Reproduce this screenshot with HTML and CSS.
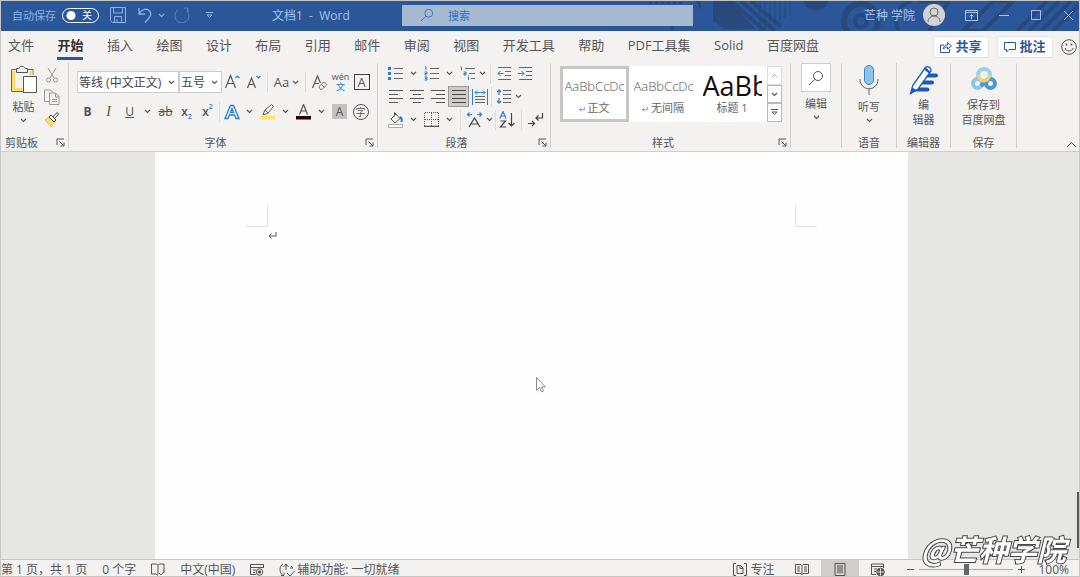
FILE: index.html
```html
<!DOCTYPE html>
<html lang="zh-CN">
<head>
	<meta charset="utf-8">
	<meta name="viewport" content="width=device-width, initial-scale=1.0">
	<title>文档1 - Word</title>
	<link rel="stylesheet" href="styles.css">
</head>
<body>
	<!-- shared icons -->
	<svg class="defs" width="0" height="0">
		<symbol id="chev" viewBox="0 0 7 5"><path d="M1 1l2.500 2.500L6 1" fill="none" stroke="currentColor" stroke-width="1.100"/></symbol>
		<symbol id="launch" viewBox="0 0 9 9"><path d="M1 7V1h7M3.500 3.500L8 8M8 4.500V8H4.500" fill="none" stroke="currentColor"/></symbol>
		<symbol id="loupe" viewBox="0 0 16 16"><circle cx="10" cy="6" r="4.500" fill="none" stroke="currentColor"/><path d="M6.700 9.300L1 15" stroke="currentColor"/></symbol>
		<symbol id="mark" viewBox="0 0 9 8"><path d="M8 1v4H1M3.500 2.500L1 5l2.500 2.500" fill="none" stroke="currentColor"/></symbol>
	</svg>

	<header class="titlebar">
		<svg class="art" width="430" height="30" viewBox="0 0 430 30" fill="none" stroke="#27497d">
			<path d="M0 2h34M2 5h28" stroke-width="2" stroke-dasharray="3 3"/>
			<path d="M47 0l5 10V0zM64 0v20l12 8h30L82 0z" fill="#27497d" stroke="none"/>
			<circle cx="23" cy="27" r="2" fill="#27497d" stroke="none"/>
			<path d="M82 0l34 30M92 0l34 30M102 0l30 26" stroke-width="4"/>
			<path d="M111 0v30M116 0v30M121 0v27M126 0v24M131 0v20M136 0v17M141 0v14" stroke-width="1"/>
			<path d="M155 0a12 9 0 0 0 24 0z" fill="#27497d" stroke="none"/>
			<circle cx="212" cy="20" r="17" stroke-width="6"/>
			<circle cx="212" cy="20" r="6" stroke-width="4"/>
			<path d="M262 0c-16 6-18 20-12 30M300 0l-20 30M270 0h30" stroke-width="4"/>
			<path d="M344 0h20l-30 30h-20zM380 30l30-30M392 30l30-30M368 30l30-30M404 30l26-26" stroke-width="4"/>
		</svg>
		<div class="quick">
			<label for="autosave">自动保存</label>
			<span class="switch">
				<input type="checkbox" id="autosave" role="switch">
				<span class="state">关</span>
			</span>
			<button type="button" class="q-save" aria-label="保存"><svg width="16" height="16" viewBox="0 0 16 16" fill="none" stroke="currentColor"><path d="M.5.5h15v15h-13l-2-2zM3.500.5v5.500h9V.5M4.500 15.500v-6h7v6M7 12v3"/></svg></button>
			<button type="button" class="q-undo" aria-label="撤消"><svg width="16" height="16" viewBox="0 0 16 16" fill="none" stroke="currentColor" stroke-width="1.300"><path d="M2 1v6h6M2 6.500C5 2 10 1 12.500 4s1 5.500-1 7.500L8 15.500"/></svg></button>
			<button type="button" class="drop" aria-label="撤消列表"><svg width="7" height="5"><use href="#chev"/></svg></button>
			<button type="button" class="q-redo" aria-label="重复"><svg width="16" height="16" viewBox="0 0 16 16" fill="none" stroke="currentColor"><path d="M10 1h4v4M14 2l-1 2M4 3a7 7 0 1 0 9 1"/></svg></button>
			<button type="button" class="q-more" aria-label="自定义快速访问工具栏"><svg width="7" height="7" viewBox="0 0 7 7" fill="none" stroke="currentColor"><path d="M0 .5h7M1 3l2.500 2.500L6 3z"/></svg></button>
		</div>
		<div class="docname">文档1&nbsp; -&nbsp; Word</div>
		<div class="search">
			<svg width="14" height="14"><use href="#loupe"/></svg>
			<input type="text" placeholder="搜索" aria-label="搜索">
		</div>
		<div class="account">
			<span class="user">芒种 学院</span>
			<span class="avatar"><svg width="22" height="22" viewBox="0 0 22 22" fill="none" stroke="#666"><circle cx="11" cy="8" r="4"/><path d="M5 18c0-8 12-8 12 0"/></svg></span>
			<button type="button" aria-label="功能区显示选项"><svg width="13" height="11" viewBox="0 0 13 11" fill="none" stroke="currentColor"><path d="M.5.5h12v10H.500zM.5 2.500h12M6.500 9V4.500M4.500 6.500l2-2 2 2"/></svg></button>
			<button type="button" aria-label="最小化"><svg width="11" height="11" viewBox="0 0 11 11" stroke="currentColor"><path d="M0 5.500h10"/></svg></button>
			<button type="button" aria-label="最大化"><svg width="11" height="11" viewBox="0 0 11 11" fill="none" stroke="currentColor"><path d="M.5.5h9v9h-9z"/></svg></button>
			<button type="button" aria-label="关闭"><svg width="11" height="11" viewBox="0 0 11 11" stroke="currentColor"><path d="M1 1l9 9M10 1l-9 9"/></svg></button>
		</div>
	</header>

	<div class="tabbar">
		<nav class="tabs">
			<a href="#">文件</a>
			<a href="#" class="active">开始</a>
			<a href="#">插入</a>
			<a href="#">绘图</a>
			<a href="#">设计</a>
			<a href="#">布局</a>
			<a href="#">引用</a>
			<a href="#">邮件</a>
			<a href="#">审阅</a>
			<a href="#">视图</a>
			<a href="#">开发工具</a>
			<a href="#">帮助</a>
			<a href="#">PDF工具集</a>
			<a href="#">Solid</a>
			<a href="#">百度网盘</a>
		</nav>
		<button type="button" class="action"><svg width="12" height="12" viewBox="0 0 12 12" fill="none" stroke="currentColor"><path d="M4 4H.5v7.500h9V8M3.500 8c0-3 1.500-4 4-4V1.500l4 3.500-4 3V6c-2 0-3 .5-4 2z"/></svg>共享</button>
		<button type="button" class="action"><svg width="12" height="12" viewBox="0 0 12 12" fill="none" stroke="currentColor"><path d="M.5 1.500h11v7H5l-2.500 2.500V8.500h-2z"/></svg>批注</button>
		<button type="button" class="smile" aria-label="反馈"><svg width="16" height="16" viewBox="0 0 16 16" fill="none" stroke="currentColor"><circle cx="8" cy="8" r="7.300"/><path d="M4 9c1 4 7 4 8 0"/><path d="M5.500 4.500v2M10.500 4.500v2" stroke-width="1.500"/></svg></button>
	</div>

	<div class="ribbon">
		<section class="group clipboard">
			<div class="body">
				<button type="button" class="tall">
					<svg width="28" height="30" viewBox="0 0 28 30" fill="none" stroke="#555">
						<path d="M8 4.500H1.500v22H13M16 4.500h7V10" stroke="#666"/>
						<path d="M3.500 6v18.500H13M21 6v4" stroke="#fbdc6c" stroke-width="3"/>
						<path d="M6.500 7.500v-4H9c1-3 5-3 6 0h2.500v4z" fill="#f3f2f1"/>
						<path d="M13.500 11.500h13v16h-13z" fill="#fff"/>
					</svg>
					<span>粘贴</span>
					<svg width="7" height="5"><use href="#chev"/></svg>
				</button>
				<div class="side">
					<button type="button" aria-label="剪切"><svg width="16" height="16" viewBox="0 0 16 16" fill="none" stroke="#999"><path d="M4 1l6 10M12 1L6 11"/><circle cx="4.500" cy="13" r="2"/><circle cx="11.500" cy="13" r="2"/></svg></button>
					<button type="button" aria-label="复制"><svg width="16" height="16" viewBox="0 0 16 16" fill="none" stroke="#999"><path d="M5 12.500H.500V1H6l3 2"/><path d="M5.500 4h6L15 7.500v8H5.500zM11.500 4v4H15M8 10.500h5M8 12.500h5"/></svg></button>
					<button type="button" aria-label="格式刷"><svg width="16" height="16" viewBox="0 0 16 16" fill="none" stroke="#444"><path d="M1 9l4-3 6 5-4 4.500z" fill="#fbdc6c" stroke="#e8bf3c"/><path d="M5 6l2-2 5 5-2 2zM9 6l4-4.500 1.500 1.500L10.500 7.500" fill="#fff"/></svg></button>
				</div>
			</div>
			<div class="caption"><span>剪贴板</span><button type="button" aria-label="剪贴板选项"><svg width="9" height="9"><use href="#launch"/></svg></button></div>
		</section>

		<section class="group font">
			<div class="body rows">
				<div class="row">
					<span class="combo name">
						<select aria-label="字体"><option>等线 (中文正文)</option></select>
						<svg width="7" height="5"><use href="#chev"/></svg>
					</span>
					<span class="combo size">
						<select aria-label="字号"><option>五号</option></select>
						<svg width="7" height="5"><use href="#chev"/></svg>
					</span>
					<button type="button" aria-label="增大字号"><svg width="17" height="17" viewBox="0 0 17 17" fill="none" stroke="#555" stroke-width="1.200"><path d="M1.500 14L6.500 1.500 11.500 14M3.500 9.500h6"/><path d="M11.500 4L13.500 2l2 2" stroke="#2b7cd3"/></svg></button>
					<button type="button" aria-label="减小字号"><svg width="17" height="17" viewBox="0 0 17 17" fill="none" stroke="#555" stroke-width="1.200"><path d="M2.500 14L6.500 4 10.500 14M4 10.500h5"/><path d="M11.500 2l2 2 2-2" stroke="#2b7cd3"/></svg></button>
					<i class="sep"></i>
					<button type="button" class="case">Aa<svg width="7" height="5"><use href="#chev"/></svg></button>
					<i class="sep"></i>
					<button type="button" aria-label="清除格式"><svg width="17" height="17" viewBox="0 0 17 17" fill="none" stroke="#555" stroke-width="1.200"><path d="M1.500 14L6.500 2 9.500 9M3.500 9.500h4.500"/><path d="M8 12.500l5-4.500 3 2.500-5 5H9.500zM10.500 10.500l3 3" stroke="#777" stroke-width="1"/></svg></button>
					<button type="button" class="pinyin"><span>wén</span><span class="blue">文</span></button>
					<button type="button"><span class="framed">A</span></button>
				</div>
				<div class="row">
					<button type="button"><b>B</b></button>
					<button type="button"><em>I</em></button>
					<button type="button"><u>U</u></button>
					<button type="button" class="drop" aria-label="下划线样式"><svg width="7" height="5"><use href="#chev"/></svg></button>
					<button type="button" class="strike"><s>ab</s></button>
					<button type="button" class="script">x<sub>2</sub></button>
					<button type="button" class="script">x<sup>2</sup></button>
					<i class="sep tight"></i>
					<button type="button" aria-label="文本效果"><svg width="16" height="16" viewBox="0 0 16 16" fill="#fff" stroke="#2b7cd3" stroke-width="1.300"><path d="M1 14.500L6.500 1.500h3L15 14.500h-3l-1.300-3.500H5.300L4 14.500zM6.300 8.500h3.400L8 4.500z"/></svg></button>
					<button type="button" class="drop" aria-label="文本效果选项"><svg width="7" height="5"><use href="#chev"/></svg></button>
					<button type="button" aria-label="突出显示"><svg width="17" height="16" viewBox="0 0 17 16" fill="none" stroke="#555"><path d="M1 12h15v3.500H1z" fill="#ffe56b" stroke="none"/><path d="M4 10.500l2-4.500L12.500.5l2 2L9 9 6 10.500zM6 6l3 3" fill="#fff"/></svg></button>
					<button type="button" class="drop" aria-label="突出显示颜色"><svg width="7" height="5"><use href="#chev"/></svg></button>
					<button type="button" aria-label="字体颜色"><svg width="17" height="16" viewBox="0 0 17 16" fill="none" stroke="#555" stroke-width="1.200"><path d="M1 12h15v3.500H1z" fill="#1c0000" stroke="none"/><path d="M4.500 10.500l4-10 4 10M6 7h5"/></svg></button>
					<button type="button" class="drop" aria-label="字体颜色选项"><svg width="7" height="5"><use href="#chev"/></svg></button>
					<button type="button"><span class="shaded">A</span></button>
					<button type="button"><span class="circled">字</span></button>
				</div>
			</div>
			<div class="caption"><span>字体</span><button type="button" aria-label="字体选项"><svg width="9" height="9"><use href="#launch"/></svg></button></div>
		</section>

		<section class="group para">
			<div class="body rows">
				<div class="row">
					<button type="button" aria-label="项目符号"><svg width="16" height="15" viewBox="0 0 16 15"><path d="M6 2.500h9M6 7.500h9M6 12.500h9" stroke="#666"/><path d="M0 1h3v3H0zM0 6h3v3H0zM0 11h3v3H0z" fill="#2b7cd3"/></svg></button>
					<button type="button" class="drop" aria-label="项目符号库"><svg width="7" height="5"><use href="#chev"/></svg></button>
					<button type="button" aria-label="编号"><svg width="16" height="15" viewBox="0 0 16 15" fill="none"><path d="M6 2.500h9M6 7.500h9M6 12.500h9" stroke="#666"/><path d="M1 1h1v3M.5 6H3v1.500H1V9h2M.5 11H3v3H.5M1 12.500h2" stroke="#2b7cd3"/></svg></button>
					<button type="button" class="drop" aria-label="编号库"><svg width="7" height="5"><use href="#chev"/></svg></button>
					<button type="button" aria-label="多级列表"><svg width="16" height="15" viewBox="0 0 16 15" fill="none"><path d="M5 2.500h10M9 7.500h6M11 12.500h4" stroke="#666"/><path d="M.5 1h1v3M3.500 6H6v3H4V7.500h2M8.500 11v3M8.500 9.500v1" stroke="#2b7cd3"/></svg></button>
					<button type="button" class="drop flush" aria-label="多级列表库"><svg width="7" height="5"><use href="#chev"/></svg></button>
					<i class="sep"></i>
					<button type="button" aria-label="减少缩进量"><svg width="15" height="13" viewBox="0 0 15 13" fill="none" stroke="#666"><path d="M1 .5h13M8 4.500h6M8 8.500h6M1 12.500h13"/><path d="M6.500 6.500H1M3.500 4L1 6.500 3.500 9" stroke="#2b7cd3"/></svg></button>
					<button type="button" aria-label="增加缩进量"><svg width="15" height="13" viewBox="0 0 15 13" fill="none" stroke="#666"><path d="M1 .5h13M8 4.500h6M8 8.500h6M1 12.500h13"/><path d="M0 6.500h6M3.500 4L6 6.500 3.500 9" stroke="#2b7cd3"/></svg></button>
				</div>
				<div class="row">
					<button type="button" aria-label="左对齐"><svg width="14" height="13" viewBox="0 0 14 13" stroke="#555"><path d="M0 .5h14M0 4.500h9M0 8.500h14M0 12.500h9"/></svg></button>
					<button type="button" aria-label="居中"><svg width="14" height="13" viewBox="0 0 14 13" stroke="#555"><path d="M0 .5h14M3 4.500h8M0 8.500h14M3 12.500h8"/></svg></button>
					<button type="button" aria-label="右对齐"><svg width="14" height="13" viewBox="0 0 14 13" stroke="#555"><path d="M0 .5h14M5 4.500h9M0 8.500h14M5 12.500h9"/></svg></button>
					<button type="button" class="on" aria-label="两端对齐"><svg width="14" height="13" viewBox="0 0 14 13" stroke="#444"><path d="M0 .5h14M0 4.500h14M0 8.500h14M0 12.500h14"/></svg></button>
					<button type="button" aria-label="分散对齐"><svg width="16" height="16" viewBox="0 0 16 16" fill="none" stroke="#666"><path d="M3 7.500h10M3 10.500h10M3 13.500h10"/><path d="M.5 0v16M15.500 0v16M3 3.500h10M5 1.500l-2 2 2 2M11 1.500l2 2-2 2" stroke="#2b7cd3"/></svg></button>
					<i class="sep tight"></i>
					<button type="button" aria-label="行和段落间距"><svg width="16" height="15" viewBox="0 0 16 15" fill="none" stroke="#666"><path d="M7 1.500h8M7 5.500h8M7 9.500h8M7 13.500h8"/><path d="M3 1v5M1 3l2-2 2 2M3 9v5M1 12l2 2 2-2" stroke="#2b7cd3" stroke-width="1.300"/></svg></button>
					<button type="button" class="drop flush" aria-label="间距选项"><svg width="7" height="5"><use href="#chev"/></svg></button>
				</div>
				<div class="row">
					<button type="button" aria-label="底纹"><svg width="17" height="16" viewBox="0 0 17 16" fill="none" stroke="#555"><path d="M1.500 12.500h14v3h-14z" fill="#fff" stroke="#aaa"/><path d="M4 7l5-5 4 4.500-5 4.500zM9 2L7.500.5v4"/><path d="M13 5c2 1 2 3 1.500 5" stroke="#2b7cd3" stroke-width="2"/></svg></button>
					<button type="button" class="drop" aria-label="底纹颜色"><svg width="7" height="5"><use href="#chev"/></svg></button>
					<button type="button" aria-label="边框"><svg width="15" height="15" viewBox="0 0 15 15" fill="none" stroke="#555"><path d="M.5 14V.5h14V14M7.500 1v13M1 7.500h13" stroke-dasharray="1 1"/><path d="M0 14.500h15" stroke-width="1.500"/></svg></button>
					<button type="button" class="drop" aria-label="边框选项"><svg width="7" height="5"><use href="#chev"/></svg></button>
					<i class="sep"></i>
					<button type="button" aria-label="中文版式"><svg width="17" height="16" viewBox="0 0 17 16" fill="none" stroke="#444" stroke-width="1.200"><path d="M3 15l5.500-9 5.500 9M5.500 12h6"/><path d="M6 2.500H1.500M3.500.5l-2 2 2 2M11 2.500h4.500M13.500.5l2 2-2 2" stroke="#2b7cd3"/></svg></button>
					<button type="button" class="drop flush" aria-label="中文版式选项"><svg width="7" height="5"><use href="#chev"/></svg></button>
					<i class="sep tight"></i>
					<button type="button" aria-label="排序"><svg width="17" height="17" viewBox="0 0 17 17" fill="none" stroke="#444" stroke-width="1.200"><path d="M1 7.500l3-7 3 7M2 5h4" stroke="#2b7cd3"/><path d="M1.500 10h5l-5 6h5.500M12.500 2v13M9.500 12l3 3 3-3"/></svg></button>
					<i class="sep"></i>
					<button type="button" aria-label="显示编辑标记"><svg width="17" height="16" viewBox="0 0 17 16" fill="none" stroke="#444" stroke-width="1.200"><path d="M15.500 1v5H9M11.500 3.500L9 6l2.500 2.500M1 11.500h6M5 9l2.500 2.500L5 14"/></svg></button>
				</div>
			</div>
			<div class="caption"><span>段落</span><button type="button" aria-label="段落选项"><svg width="9" height="9"><use href="#launch"/></svg></button></div>
		</section>

		<section class="group styles">
			<div class="body">
				<div class="gallery">
					<button type="button" class="style current"><span class="preview">AaBbCcDc</span><span><svg width="6" height="6"><use href="#mark"/></svg> 正文</span></button>
					<button type="button" class="style"><span class="preview">AaBbCcDc</span><span><svg width="6" height="6"><use href="#mark"/></svg> 无间隔</span></button>
					<button type="button" class="style"><span class="preview big">AaBb</span><span>标题 1</span></button>
					<div class="scroll">
						<button type="button" class="dim" aria-label="上一行"><svg width="7" height="5" viewBox="0 0 7 5" fill="none" stroke="currentColor"><path d="M1 4l2.500-2.500L6 4"/></svg></button>
						<button type="button" aria-label="下一行"><svg width="7" height="5"><use href="#chev"/></svg></button>
						<button type="button" aria-label="其他"><svg width="7" height="7" viewBox="0 0 7 7" fill="none" stroke="currentColor"><path d="M0 .5h7M1 3l2.500 2.500L6 3z"/></svg></button>
					</div>
				</div>
			</div>
			<div class="caption"><span>样式</span><button type="button" aria-label="样式选项"><svg width="9" height="9"><use href="#launch"/></svg></button></div>
		</section>

		<section class="group edit">
			<div class="body">
				<button type="button" class="tall">
					<span class="tile"><svg width="16" height="16"><use href="#loupe"/></svg></span>
					<span>编辑</span>
					<svg width="7" height="5"><use href="#chev"/></svg>
				</button>
			</div>
		</section>

		<section class="group voice">
			<div class="body">
				<button type="button" class="tall">
					<svg width="22" height="30" viewBox="0 0 22 30" fill="none" stroke="#666"><rect x="6.500" y=".5" width="9" height="19" rx="4.500" fill="#8fc3ec" stroke="#3d86c6"/><path d="M2 14c0 13 18 13 18 0M11 23.500V30"/></svg>
					<span>听写</span>
					<svg width="7" height="5"><use href="#chev"/></svg>
				</button>
			</div>
			<div class="caption"><span>语音</span></div>
		</section>

		<section class="group editor">
			<div class="body">
				<button type="button" class="tall">
					<svg width="30" height="30" viewBox="0 0 30 30"><path d="M17 8.500h10a2 2 0 0 1 0 4H14zM13 15.500h10a2 2 0 0 1 0 4H11zM9 22.500h9.500a2 2 0 0 1 0 4H5z" fill="#185abd"/><path d="M1.500 28.500L4 20 16.500 2.500c2-2 6 0 5.500 3.500L9 24z" fill="#fff" stroke="#185abd" stroke-width="1.300"/><path d="M1.500 29l2-6.500 4.500 3zM15 4.500l5 4 1-2-4-4z" fill="#185abd"/></svg>
					<span>编<br>辑器</span>
				</button>
			</div>
			<div class="caption"><span>编辑器</span></div>
		</section>

		<section class="group save">
			<div class="body">
				<button type="button" class="tall">
					<svg width="28" height="30" viewBox="0 0 28 30" fill="none" stroke-width="4"><circle cx="14" cy="10" r="6" stroke="#9dcdf0"/><circle cx="7.500" cy="18.500" r="4.500" stroke="#8cc4ec"/><path d="M11 21l6-6" stroke="#4a98d9"/><circle cx="20.500" cy="18.500" r="4.500" stroke="#4a98d9"/><path d="M8.500 10c0 8 11 8 11 0" stroke="#fbd54a" stroke-width="3"/></svg>
					<span>保存到<br>百度网盘</span>
				</button>
			</div>
			<div class="caption"><span>保存</span></div>
		</section>

		<button type="button" class="collapse" aria-label="折叠功能区"><svg width="11" height="7" viewBox="0 0 11 7" fill="none" stroke="currentColor"><path d="M1 6l4.500-4.500L10 6"/></svg></button>
	</div>

	<main class="workspace">
		<article class="page">
			<div class="corners"><i class="left"></i><i class="right"></i></div>
			<p contenteditable="true" aria-label="正文"><svg width="9" height="8"><use href="#mark"/></svg></p>
		</article>
		<svg class="pointer" width="10" height="16" viewBox="0 0 10 16"><path d="M.5.5v13l3-3 2 4.500 2-1-2-4h4z" fill="#fff" stroke="#888"/></svg>
		<i class="thumb"></i>
	</main>

	<footer class="status">
		<span class="pages">第 1 页，共 1 页</span>
		<span>0 个字</span>
		<svg width="14" height="13" viewBox="0 0 14 13" fill="none" stroke="currentColor"><path d="M.5 1h4.500c1 0 2 1 2 1s1-1 2-1h4v9M7 2v9.500M.5 1v10H5l2 1.500M8 10l2 2 3.500-4"/></svg>
		<span>中文(中国)</span>
		<svg width="14" height="13" viewBox="0 0 14 13" fill="none" stroke="currentColor"><path d="M6 11.500H.5v-10h13V5M.5 4.500h13M3 7h3M3 9.500h2"/><circle cx="9.500" cy="9" r="3.300"/><circle cx="9.500" cy="9" r="1.300" fill="currentColor"/></svg>
		<span class="access"><svg width="16" height="14" viewBox="0 0 16 14" fill="none" stroke="currentColor"><path d="M4 1C0 3 0 10 4 12.500M2 12.500h3v-3M7 1v6M4.500 4L7 1l2.500 3M8 10l3 3 4.500-5M11 5h3M14 5l-2-2"/></svg>辅助功能: 一切就绪</span>
		<button type="button" class="focus"><svg width="14" height="13" viewBox="0 0 14 13" fill="none" stroke="currentColor"><path d="M3 .5H.5V12.500H3M11 .5h2.500v12H11M4 2.500h3.500L10 5v5.500H4zM7 3v2.500h3"/></svg>专注</button>
		<div class="views">
			<button type="button" aria-label="阅读视图"><svg width="14" height="13" viewBox="0 0 14 13" fill="none" stroke="currentColor"><path d="M.5 1.500H6L7 2.500l1-1h5.500v9H8l-1 1-1-1H.5zM7 2.500v9M2 4h3M2 6h3M2 8h3M9 4h3M9 6h3M9 8h3"/></svg></button>
			<button type="button" class="current" aria-label="页面视图"><svg width="12" height="13" viewBox="0 0 12 13" fill="none" stroke="currentColor"><path d="M1 .5h10v12H1zM3 3h6M3 5h6M3 7h6M3 9h6"/></svg></button>
			<button type="button" aria-label="Web 版式视图"><svg width="14" height="13" viewBox="0 0 14 13" fill="none" stroke="currentColor"><path d="M5 11.500H.5V1h12v4M.5 3.500h12M3 6h3M3 8.500h2"/><circle cx="9.500" cy="9" r="3.800" fill="#555"/><path d="M6 9h7M9.500 5.500v7" stroke="#ddd"/></svg></button>
		</div>
		<div class="zoom">
			<button type="button" aria-label="缩小"><svg width="9" height="9" viewBox="0 0 9 9" stroke="currentColor"><path d="M1 4.500h7"/></svg></button>
			<input type="range" min="10" max="190" value="100" aria-label="缩放">
			<button type="button" aria-label="放大"><svg width="9" height="9" viewBox="0 0 9 9" stroke="currentColor"><path d="M1 4.500h7M4.500 1v7"/></svg></button>
			<span class="percent">100%</span>
		</div>
	</footer>

	<div class="signature">@芒种学院</div>
</body>
</html>
```
FILE: styles.css
```css
* {
	box-sizing: border-box;
}
body {
	margin: 0;
	height: 100vh;
	display: flex;
	flex-direction: column;
	overflow: hidden;
	border: 1px solid #c6c6c4;
	background-color: #f3f2f1;
	color: #555;
	font-family: "Open Sans", "Noto Sans CJK SC", sans-serif;
	font-size: 11px;
	line-height: 15px;
}
button, input, select {
	margin: 0;
	padding: 0;
	border: 0;
	background: none;
	color: inherit;
	font: inherit;
}
button {
	display: flex;
	align-items: center;
	justify-content: center;
	flex: none;
}
svg {
	flex: none;
}
.defs {
	position: absolute;
}

/* title bar */
.titlebar {
	position: relative;
	flex: none;
	display: grid;
	grid-template-columns: 271px 130px 27% 1fr;
	align-items: center;
	height: 30px;
	padding-bottom: 2px;
	background-color: #2b579a;
	color: #a5c3ea;
}
.art {
	position: absolute;
	right: 0;
	top: 0;
}
.quick, .account {
	position: relative;
	display: flex;
	align-items: center;
}
.quick {
	padding-left: 11px;
	color: #8db2e3;
}
.switch {
	position: relative;
	display: flex;
	margin: 0 11px 0 6px;
}
.switch input {
	appearance: none;
	width: 37px;
	height: 15px;
	border: 1px solid #fff;
	border-radius: 8px;
	background: radial-gradient(circle at 8px 50%, #fff 4px, transparent 5px);
}
.state {
	position: absolute;
	right: 7px;
	color: #fff;
	font-size: 10px;
	pointer-events: none;
}
.q-save {
	margin-right: 11px;
}
.quick .drop {
	width: 17px;
}
.q-redo {
	margin: 0 16px 0 4px;
	color: #5583c0;
}
.docname {
	font-size: 12px;
}
.search {
	position: relative;
	display: flex;
	align-items: center;
	gap: 14px;
	height: 21px;
	padding-left: 18px;
	background-color: #a6b9d3;
	color: #2f6fc0;
}
.search input {
	flex: 1;
	min-width: 0;
	outline: 0;
}
.search input::placeholder {
	color: #2f6fc0;
}
.account {
	justify-content: flex-end;
	padding-right: 5px;
}
.user {
	font-size: 12px;
}
.avatar {
	display: flex;
	margin: 0 20px 0 8px;
	border-radius: 50%;
	background-color: #d2d2d2;
}
.account button + button {
	margin-left: 21px;
}

/* tabs */
.tabbar {
	flex: none;
	display: flex;
	align-items: center;
	height: 31px;
	padding: 0 2px 0 7px;
}
.tabs {
	flex: 1;
	display: flex;
	justify-content: space-between;
	margin-right: 114px;
}
.tabs a {
	padding: 4px 0;
	border-bottom: 3px solid transparent;
	color: #555;
	font-size: 13px;
	text-decoration: none;
}
.tabs a.active {
	border-color: #2b579a;
	color: #333;
	font-weight: bold;
}
.action {
	gap: 3px;
	width: 56px;
	height: 22px;
	margin-right: 8px;
	border: 1px solid #e4e2e0;
	border-radius: 2px;
	background-color: #fff;
	color: #2b579a;
	font-size: 13px;
	font-weight: bold;
}

/* ribbon */
.ribbon {
	flex: none;
	display: flex;
	height: 90px;
	padding: 1px 0 3px;
	border-bottom: 1px solid #d0cfce;
}
.group {
	flex: none;
	display: flex;
	flex-direction: column;
	border-right: 1px solid #d0cfce;
}
.clipboard { width: 68px; }
.font { width: 309px; }
.para { width: 173px; }
.styles { width: 240px; }
.edit { width: 51px; }
.voice { width: 55px; }
.editor { width: 54px; }
.save { width: 66px; }
.body {
	flex: 1;
	display: flex;
	justify-content: center;
}
.rows {
	flex-direction: column;
	justify-content: flex-start;
}
.caption {
	display: flex;
	align-items: center;
	height: 11px;
}
.caption span {
	flex: 1;
	text-align: center;
	line-height: 11px;
	white-space: nowrap;
}
.caption button {
	width: 15px;
}
.clipboard .caption span {
	padding-left: 4px;
	text-align: left;
}
.tall {
	flex-direction: column;
	justify-content: flex-start;
	gap: 4px;
	padding-top: 2px;
}
.side {
	display: flex;
	flex-direction: column;
	gap: 6px;
	padding: 4px 0 0 6px;
}
.row {
	display: flex;
	align-items: center;
}
.row button {
	width: 21px;
	height: 21px;
}
.row .drop {
	width: 15px;
}
.row .flush {
	width: 9px;
}
.sep {
	width: 1px;
	height: 20px;
	margin: 0 3px;
	background-color: #dcdad8;
}
.sep.tight {
	margin: 0 1px;
}
.font .rows {
	gap: 8px;
	padding: 8px 0 0 8px;
}
.combo {
	position: relative;
	height: 22px;
	border: 1px solid #cfcdcb;
	background-color: #fff;
}
.combo select {
	appearance: none;
	display: block;
	width: 100%;
	height: 20px;
	padding-left: 1px;
	color: #444;
	font-size: 12px;
}
.combo svg {
	position: absolute;
	right: 3px;
	top: 8px;
	pointer-events: none;
}
.name {
	width: 102px;
}
.size {
	width: 43px;
}
.row .case {
	gap: 3px;
	width: 31px;
	font-size: 13px;
}
.row .pinyin {
	flex-direction: column;
	font-size: 9px;
	line-height: 10px;
}
.blue, sub, sup {
	color: #2b7cd3;
}
.framed {
	width: 16px;
	border: 1px solid #444;
	font-size: 13px;
	line-height: 14px;
}
.shaded {
	width: 15px;
	background-color: #c2c1c0;
	font-size: 12px;
}
.circled {
	width: 16px;
	border: 1px solid #555;
	border-radius: 50%;
	font-size: 10px;
	line-height: 14px;
}
.font .row b, .font .row u, .strike, .script {
	font-size: 12px;
}
.font .row em {
	font-family: "Liberation Serif", serif;
	font-size: 14px;
}
.script {
	font-weight: 600;
}
sub, sup {
	font-size: 7px;
	line-height: 7px;
}
sub {
	align-self: flex-end;
	margin-bottom: 2px;
}
sup {
	align-self: flex-start;
	margin-top: 2px;
}
.para .rows {
	padding-left: 7px;
	gap: 2px;
}
.row .on {
	border: 1px solid #9a9998;
	background-color: #cfcdcb;
}

/* style gallery */
.gallery {
	display: flex;
	width: 222px;
	height: 56px;
	margin: 3px 0 0;
	background-color: #fff;
}
.style {
	flex: 1;
	flex-direction: column;
	min-width: 0;
	padding: 0 2px 2px;
	border: 3px solid #fff;
	color: #666;
}
.style.current {
	border-color: #c8c6c4;
}
.preview {
	width: 100%;
	height: 28px;
	overflow: hidden;
	color: #555;
	font-size: 13px;
	font-weight: 300;
	line-height: 28px;
	text-align: left;
}
.big {
	color: #1a0a0a;
	font-size: 27px;
	font-weight: 400;
}
.scroll {
	display: flex;
	flex-direction: column;
	width: 15px;
}
.scroll button {
	flex: 1;
	border: 1px solid #bbb9b7;
}
.scroll .dim {
	border-color: #dddbd9;
	color: #aaa;
}
.tile {
	display: flex;
	align-items: center;
	justify-content: center;
	width: 30px;
	height: 29px;
	border: 1px solid #d0cfce;
	background-color: #fff;
}
.edit .tall {
	padding-top: 0;
}
.editor .tall, .save .tall {
	gap: 2px;
}
.collapse {
	align-self: flex-end;
	margin: 0 2px 0 auto;
}

/* document */
.workspace {
	position: relative;
	flex: 1;
	min-height: 0;
	display: flex;
	justify-content: center;
	padding-right: 17px;
	background-color: #e6e6e5;
}
.page {
	width: 71%;
	padding: 52px 91px 0;
	background-color: #fefefe;
}
.corners {
	display: flex;
	justify-content: space-between;
}
.corners i {
	width: 22px;
	height: 23px;
	border-bottom: 1px solid #e2e2e2;
}
.corners .left {
	border-right: 1px solid #e2e2e2;
}
.corners .right {
	border-left: 1px solid #e2e2e2;
}
.page p {
	margin: 0 22px;
	outline: 0;
}
.pointer {
	position: absolute;
	left: 535px;
	top: 225px;
}
.thumb {
	position: absolute;
	right: 0;
	bottom: 11px;
	width: 2px;
	height: 56px;
	background-color: #555;
}

/* status bar */
.status {
	flex: none;
	display: flex;
	align-items: center;
	gap: 15px;
	height: 17px;
	padding-top: 3px;
	border-top: 1px solid #c8c7c6;
	font-size: 12px;
	line-height: 13px;
	white-space: nowrap;
}
.access, .focus, .views, .zoom {
	display: flex;
	align-items: center;
	gap: 2px;
}
.focus {
	gap: 3px;
	margin-left: auto;
}
.views {
	gap: 0;
	margin: -3px -6px 0;
}
.views button {
	width: 38px;
	height: 16px;
	padding-top: 3px;
}
.views .current {
	background-color: #cfcecd;
}
.zoom {
	gap: 4px;
	padding-right: 10px;
}
.zoom input {
	appearance: none;
	width: 94px;
	height: 12px;
	background: linear-gradient(#aaa, #aaa) center / 100% 1px no-repeat;
}
.zoom input::-webkit-slider-thumb {
	appearance: none;
	width: 5px;
	height: 11px;
	background-color: #666;
}
.percent {
	margin-left: 8px;
}

.signature {
	position: fixed;
	right: 14px;
	bottom: 11px;
	color: #fff;
	font-family: "Noto Sans CJK SC", sans-serif;
	font-size: 29px;
	font-style: italic;
	font-weight: 700;
	line-height: 36px;
	-webkit-text-stroke: 2px #444;
	paint-order: stroke fill;
}
```
